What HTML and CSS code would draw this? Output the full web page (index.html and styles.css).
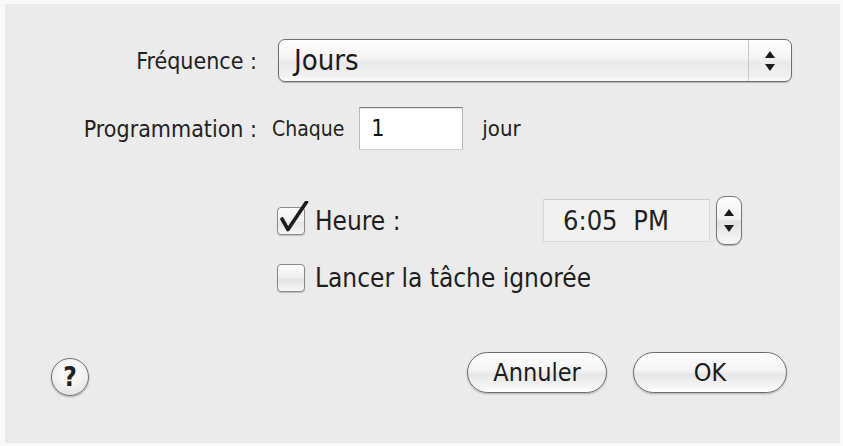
FILE: index.html
```html
<!DOCTYPE html>
<html lang="fr">
<head>
<meta charset="utf-8">
<title>Programmation</title>
<link rel="stylesheet" href="styles.css">
</head>
<body>
<div class="frame">
  <div class="panel">
    <div class="row row-freq">
      <div class="label">Fréquence :</div>
      <div class="popup">
        <div class="popup-value">Jours</div>
        <div class="popup-arrows">
          <svg width="10" height="7" viewBox="0 0 10 7"><path d="M5 0 L10 7 L0 7 Z" fill="#1a1a1a"/></svg>
          <svg width="10" height="7" viewBox="0 0 10 7"><path d="M0 0 L10 0 L5 7 Z" fill="#1a1a1a"/></svg>
        </div>
      </div>
    </div>

    <div class="row row-prog">
      <div class="label">Programmation :</div>
      <div class="text chaque">Chaque</div>
      <div class="field">1</div>
      <div class="text jour">jour</div>
    </div>

    <div class="row option-row row-heure">
      <div class="checkbox checked">
        <svg class="check" width="34" height="34" viewBox="0 0 34 34"><path d="M5 18 L11 28.5 L29.5 1" fill="none" stroke="#1c1c1c" stroke-width="3.6" stroke-linejoin="round" stroke-linecap="round"/></svg>
      </div>
      <div class="option-label heure">Heure :</div>
      <div class="time-field">6:05 PM</div>
      <div class="stepper">
        <svg width="10" height="7" viewBox="0 0 10 7"><path d="M5 0 L10 7 L0 7 Z" fill="#1a1a1a"/></svg>
        <svg width="10" height="7" viewBox="0 0 10 7"><path d="M0 0 L10 0 L5 7 Z" fill="#1a1a1a"/></svg>
      </div>
    </div>

    <div class="row option-row row-lancer">
      <div class="checkbox"></div>
      <div class="option-label">Lancer la tâche ignorée</div>
    </div>

    <div class="row footer">
      <div class="help">?</div>
      <div class="buttons">
        <div class="button btn-cancel">Annuler</div>
        <div class="button btn-ok">OK</div>
      </div>
    </div>
  </div>
</div>
</body>
</html>
```

FILE: styles.css
```css
html, body {
  margin: 0;
  padding: 0;
}

body {
  width: 843px;
  height: 446px;
  overflow: hidden;
  background: #f9f9f9;
  font-family: "DejaVu Sans Condensed", "DejaVu Sans", sans-serif;
  font-stretch: condensed;
  color: #1e1e1e;
}

.frame {
  box-sizing: border-box;
  height: 446px;
  padding: 4px 3px 3px 5px;
}

.panel {
  box-sizing: border-box;
  height: 100%;
  background: #ebebeb;
  display: flex;
  flex-direction: column;
  padding-top: 35px;
}

.row {
  display: flex;
  align-items: center;
}

.label {
  flex: none;
  width: 252px;
  margin-right: -2px;
  text-align: right;
  font-size: 23px;
  color: #222;
}

/* popup */
.popup {
  margin-left: 23px;
  width: 514px;
  height: 43px;
  box-sizing: border-box;
  border: 1px solid #6e6e6e;
  border-radius: 7px;
  background: linear-gradient(#fefefe, #f4f4f4 45%, #e9e9e9 55%, #f1f1f1 88%, #fdfdfd);
  box-shadow: 0 1px 1px rgba(0, 0, 0, 0.22);
  display: flex;
}

.popup-value {
  flex: 1;
  font-size: 29px;
  line-height: 41px;
  padding-left: 15px;
  color: #1a1a1a;
}

.popup-arrows {
  width: 42px;
  border-left: 1px solid #c6c6c6;
  display: flex;
  flex-direction: column;
  align-items: center;
  justify-content: center;
  gap: 6px;
}

.popup-arrows svg,
.stepper svg {
  display: block;
}

/* programmation row */
.row-prog {
  margin-top: 25px;
}

.text {
  font-size: 21px;
  color: #222;
}

.chaque {
  margin-left: 17px;
}

.field {
  margin-left: 15px;
  width: 104px;
  height: 43px;
  box-sizing: border-box;
  background: #fff;
  border: 1px solid #b9b9b9;
  border-top-color: #7f7f7f;
  border-bottom-color: #d2d2d2;
  box-shadow: inset 0 1px 1px rgba(0, 0, 0, 0.12);
  font-size: 23px;
  line-height: 41px;
  padding-left: 11px;
  color: #111;
}

.jour {
  margin-left: 19px;
  font-size: 22px;
}

/* options */
.option-row {
  padding-left: 272px;
}

.row-heure {
  margin-top: 46px;
}

.row-lancer {
  margin-top: 18px;
}

.checkbox {
  position: relative;
  flex: none;
  width: 28px;
  height: 28px;
  box-sizing: border-box;
  border: 1px solid #8a8a8a;
  border-radius: 4px;
  background: linear-gradient(#fdfdfd, #efefef 50%, #e4e4e4 55%, #f6f6f6);
  box-shadow: 0 1px 1px rgba(0, 0, 0, 0.2);
}

.check {
  position: absolute;
  left: -1px;
  top: -7px;
}

.option-label {
  margin-left: 10px;
  font-size: 26px;
  color: #1e1e1e;
}

.heure {
  width: 228px;
}

.time-field {
  width: 167px;
  height: 43px;
  box-sizing: border-box;
  background: #f1f1f1;
  border: 1px solid #d9d9d9;
  border-top-color: #cfcfcf;
  font-size: 27px;
  line-height: 41px;
  padding-left: 19px;
  word-spacing: 8px;
  color: #222;
}

.stepper {
  margin-left: 6px;
  width: 26px;
  height: 49px;
  box-sizing: border-box;
  border: 1px solid #767676;
  border-radius: 9px;
  background: linear-gradient(#fefefe, #f0f0f0 48%, #e2e2e2 52%, #f7f7f7);
  box-shadow: 0 1px 1px rgba(0, 0, 0, 0.25);
  display: flex;
  flex-direction: column;
  align-items: center;
  justify-content: center;
  gap: 9px;
}

/* footer */
.footer {
  margin-top: 55px;
  justify-content: space-between;
  padding: 0 53px 0 46px;
}

.help {
  margin-top: 10px;
  width: 38px;
  height: 38px;
  box-sizing: border-box;
  border: 1px solid #737373;
  border-radius: 50%;
  background: radial-gradient(circle at 50% 35%, #ffffff 0%, #f4f4f4 45%, #dcdcdc 100%);
  box-shadow: 0 1px 2px rgba(0, 0, 0, 0.3);
  font-weight: bold;
  font-size: 26px;
  line-height: 36px;
  text-align: center;
  color: #222;
}

.buttons {
  display: flex;
  gap: 26px;
}

.button {
  height: 41px;
  box-sizing: border-box;
  border: 1px solid #6c6c6c;
  border-radius: 21px;
  background: linear-gradient(#ffffff, #f3f3f3 45%, #e6e6e6 55%, #f4f4f4 85%, #ffffff);
  box-shadow: 0 1px 2px rgba(0, 0, 0, 0.28);
  font-size: 25px;
  line-height: 39px;
  text-align: center;
  color: #1a1a1a;
}

.btn-cancel {
  width: 140px;
}

.btn-ok {
  width: 154px;
}
```
